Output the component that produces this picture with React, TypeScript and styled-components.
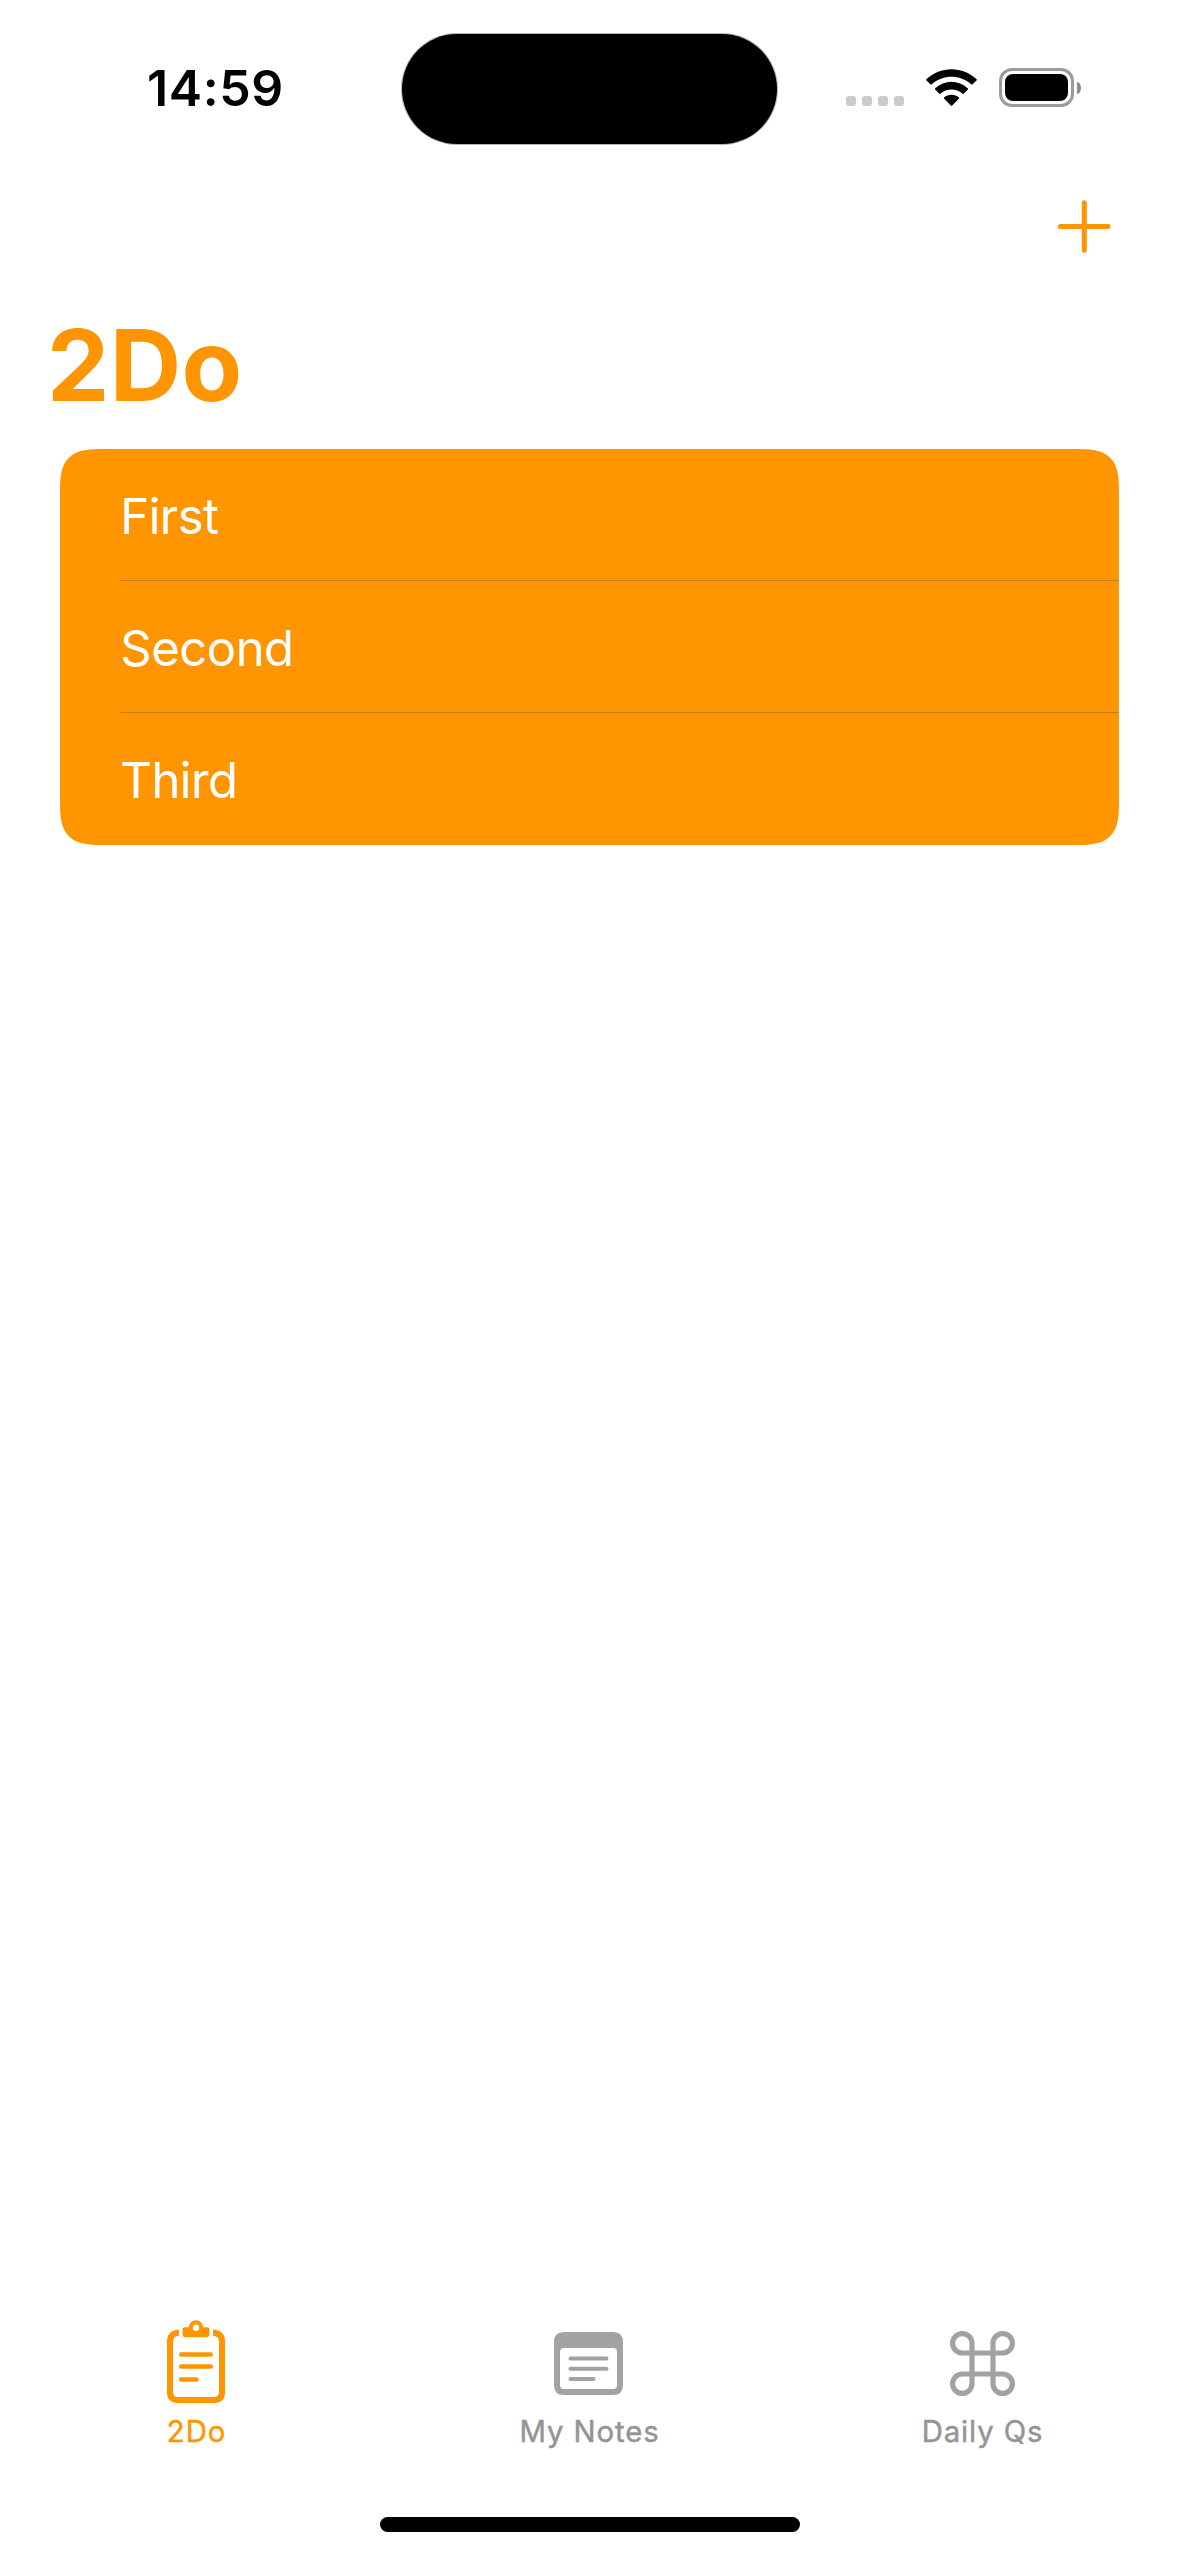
import React from "react";
import styled, { createGlobalStyle } from "styled-components";

const ORANGE = "#ff9500";
const GREY = "#a2a2a2";

const GlobalStyle = createGlobalStyle`
  *, *::before, *::after { box-sizing: border-box; }
  body {
    margin: 0;
    background: #fff;
    font-family: Inter, "Liberation Sans", sans-serif;
  }
`;

const Screen = styled.div`
  width: 1179px;
  height: 2556px;
  display: flex;
  flex-direction: column;
  background: #fff;
  overflow: hidden;
`;

const StatusBar = styled.header`
  height: 177px;
  padding: 33px 98px 0 0;
  display: grid;
  grid-template-columns: 402px 375px 1fr;
  align-items: start;
`;

const Clock = styled.div`
  padding-left: 147px;
  height: 110px;
  line-height: 110px;
  font-size: 50px;
  font-weight: 600;
  letter-spacing: 0.6px;
  color: #000;
  white-space: nowrap;
`;

const Island = styled.div`
  height: 110px;
  margin-top: 1px;
  border-radius: 55px;
  background: #000;
  box-shadow: 0 0 0 1px rgba(0, 0, 0, 0.3);
`;

const StatusIcons = styled.div`
  height: 109px;
  display: flex;
  justify-content: flex-end;
  align-items: center;
`;

const SignalDots = styled.div`
  display: flex;
  gap: 6px;
  margin: 27px 22px 0 0;
`;

const Dot = styled.span`
  width: 10px;
  height: 10px;
  border-radius: 3px;
  background: #cbcbcb;
`;

const WifiSvg = styled.svg`
  display: block;
  margin-right: 22px;
`;

const Battery = styled.div`
  display: flex;
  align-items: center;
  gap: 3px;
`;

const BatteryShell = styled.div`
  width: 75px;
  height: 39px;
  padding: 3px;
  border: 3px solid #9b9b9b;
  border-radius: 13px;
  display: flex;
`;

const BatteryCharge = styled.div`
  flex: 1;
  border-radius: 8px;
  background: #000;
`;

const BatteryNub = styled.div`
  width: 4px;
  height: 12px;
  border-radius: 0 4px 4px 0 / 0 6px 6px 0;
  background: #8c8c8c;
`;

const NavBar = styled.nav`
  height: 132px;
  padding: 23px 68px 0 0;
  display: flex;
  justify-content: flex-end;
  align-items: flex-start;
`;

const AddButton = styled.button`
  display: block;
  padding: 0;
  border: 0;
  background: none;
  color: ${ORANGE};
  svg { display: block; }
`;

const Title = styled.h1`
  margin: 0;
  height: 140px;
  padding-left: 47px;
  line-height: 112px;
  font-size: 99px;
  font-weight: 700;
  letter-spacing: 0.3px;
  color: ${ORANGE};
`;

const List = styled.ul`
  list-style: none;
  margin: 0 60px;
  padding: 0 0 0 60px;
  background: ${ORANGE};
  border-radius: 33px;
  @supports (corner-shape: superellipse(1.7)) {
    border-radius: 46px;
    corner-shape: superellipse(1.7);
  }
`;

const Item = styled.li`
  height: 132px;
  padding-top: 2px;
  line-height: 131px;
  font-size: 49.5px;
  font-weight: 400;
  letter-spacing: -0.8px;
  color: #fff;
  &:not(:last-child) { border-bottom: 1px solid #c77d1a; }
`;

const Spacer = styled.div`
  flex: 1;
`;

const TabBar = styled.footer`
  height: 197px;
  display: grid;
  grid-template-columns: repeat(3, 1fr);
`;

const Tab = styled.div<{ $active?: boolean }>`
  display: flex;
  flex-direction: column;
  align-items: center;
  color: ${(p) => (p.$active ? ORANGE : GREY)};
`;

const IconBox = styled.div<{ $nudge: number }>`
  height: 94px;
  margin-right: ${(p) => p.$nudge}px;
  display: flex;
  align-items: flex-start;
  svg { display: block; }
`;

const TabLabel = styled.span<{ $active?: boolean }>`
  line-height: 36px;
  font-size: 29.3px;
  font-weight: 400;
  letter-spacing: 0.9px;
  -webkit-text-stroke: 0.45px currentColor;
  color: ${(p) => (p.$active ? ORANGE : "#949494")};
  white-space: nowrap;
`;

const HomeIndicator = styled.div`
  width: 420px;
  height: 15px;
  margin: 0 auto 24px;
  border-radius: 8px;
  background: #000;
`;

const WifiIcon = () => (
  <WifiSvg width="51" height="38" viewBox="0 0 51 38">
    <path d="M0.4 10.3C14 -3.2 37 -3.2 50.6 10.3Q51 11 50.5 11.5L46.4 15.4Q45.8 15.8 45.2 15.3C34.2 5.1 16.8 5.1 5.8 15.3Q5.2 15.8 4.6 15.4L0.5 11.5Q0 11 0.4 10.3Z" />
    <path d="M9.1 19.4C18.3 10.6 32.7 10.6 41.9 19.4Q42.3 20 41.9 20.5L37.6 24.7Q37 25.1 36.4 24.6C30.2 19.2 20.8 19.2 14.6 24.6Q14 25.1 13.4 24.7L9.1 20.5Q8.7 20 9.1 19.4Z" />
    <path d="M18 28.5C22.2 24.7 28.8 24.7 33 28.5Q33.4 29 33 29.6L26.2 36.6Q25.5 37.2 24.8 36.6L18 29.6Q17.6 29 18 28.5Z" />
  </WifiSvg>
);

const PlusIcon = () => (
  <svg width="53" height="53" viewBox="0 0 53 53" fill="none" stroke="currentColor" strokeWidth="5" strokeLinecap="round">
    <path d="M26.3 2.8V50.2M2.5 26.6H50" />
  </svg>
);

const ClipboardIcon = () => (
  <svg width="58" height="91" viewBox="0 0 58 91" fill="none" stroke="currentColor">
    <path strokeWidth="6" d="M12 12.7H11.5Q3 13.3 3 21.5V72Q3 80 11 80H47Q55 80 55 72V21.5Q55 13.3 46.5 12.7H46" />
    <path
      fill="currentColor"
      stroke="none"
      fillRule="evenodd"
      d="M17.5 7.3H21.7C22.5 3.1 25.2 0.3 29 0.3S35.5 3.1 36.3 7.3H40.5Q42.5 7.3 42.5 9.3V14.3Q42.5 17.3 39.5 17.3H18.5Q15.5 17.3 15.5 14.3V9.3Q15.5 7.3 17.5 7.3ZM29 4.5A3.2 3.2 0 1 0 29 10.9A3.2 3.2 0 1 0 29 4.5Z"
    />
    <path strokeWidth="4.6" strokeLinecap="round" d="M14.3 34.5H43.7M14.3 46.5H43.7M14.3 59.5H29.5" />
  </svg>
);

const NotesIcon = () => (
  <svg width="69" height="75" viewBox="0 -12 69 75">
    <path
      fill="currentColor"
      fillRule="evenodd"
      d="M10 0H59Q69 0 69 10V53Q69 63 59 63H10Q0 63 0 53V10Q0 0 10 0ZM10 16Q6 16 6 20V53Q6 57 10 57H59Q63 57 63 53V20Q63 16 59 16Z"
    />
    <path stroke="currentColor" strokeWidth="4" strokeLinecap="round" d="M16.5 26.5H52.5M16.5 36.7H52.5M16.5 47H39.5" />
  </svg>
);

const CommandIcon = () => (
  <svg width="65" height="76" viewBox="0 -11 65 76" fill="none" stroke="currentColor" strokeWidth="5.2">
    <path d="M22 12.3A9.7 9.7 0 1 0 12.3 22H52.7A9.7 9.7 0 1 0 43 12.3V52.7A9.7 9.7 0 1 0 52.7 43H12.3A9.7 9.7 0 1 0 22 52.7Z" />
  </svg>
);

const items = ["First", "Second", "Third"];

const tabs = [
  { label: "2Do", icon: <ClipboardIcon />, active: true, nudge: 1 },
  { label: "My Notes", icon: <NotesIcon />, active: false, nudge: 2 },
  { label: "Daily Qs", icon: <CommandIcon />, active: false, nudge: 0 },
];

export default function App() {
  return (
    <>
      <GlobalStyle />
      <Screen>
        <StatusBar>
          <Clock>14:59</Clock>
          <Island />
          <StatusIcons>
            <SignalDots>
              <Dot />
              <Dot />
              <Dot />
              <Dot />
            </SignalDots>
            <WifiIcon />
            <Battery>
              <BatteryShell>
                <BatteryCharge />
              </BatteryShell>
              <BatteryNub />
            </Battery>
          </StatusIcons>
        </StatusBar>
        <NavBar>
          <AddButton aria-label="Add">
            <PlusIcon />
          </AddButton>
        </NavBar>
        <Title>2Do</Title>
        <List>
          {items.map((text) => (
            <Item key={text}>{text}</Item>
          ))}
        </List>
        <Spacer />
        <TabBar>
          {tabs.map((tab) => (
            <Tab key={tab.label} $active={tab.active}>
              <IconBox $nudge={tab.nudge}>{tab.icon}</IconBox>
              <TabLabel $active={tab.active}>{tab.label}</TabLabel>
            </Tab>
          ))}
        </TabBar>
        <HomeIndicator />
      </Screen>
    </>
  );
}
